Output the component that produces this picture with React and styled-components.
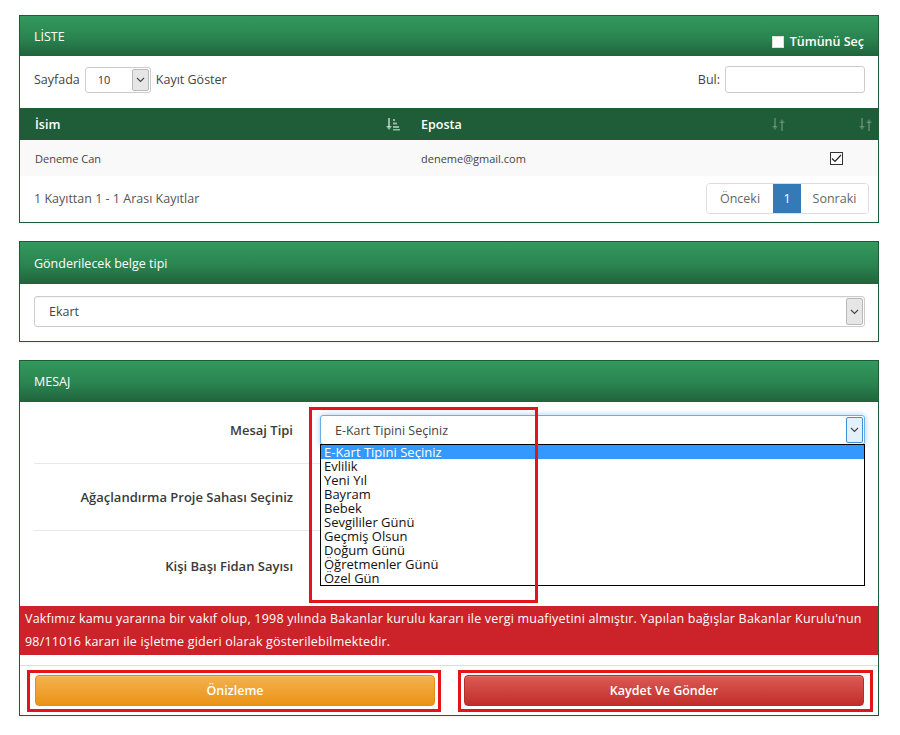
import React from "react";
import styled, { createGlobalStyle } from "styled-components";

const GlobalStyle = createGlobalStyle`
  html, body { margin: 0; padding: 0; background: #fff; }
  body { font-family: "Open Sans", "Noto Sans", Arial, sans-serif; color: #333; font-size: 13px; }
  * { box-sizing: border-box; }
`;

const Page = styled.div`
  display: flex;
  flex-direction: column;
  gap: 18px;
  padding: 15px 21px 20px 19px;
`;

const Panel = styled.section`
  border: 1px solid #1f5a37;
  background: #fff;
  box-shadow: 0 1px 2px rgba(0,0,0,0.06);
  position: relative;
`;

const PanelHeader = styled.header`
  height: ${p => p.$h || 40}px;
  background: linear-gradient(to bottom, #33995d 0%, #2a8450 55%, #21633b 100%);
  color: #fff;
  font-size: 12.5px;
  padding: 0 14px;
  display: flex;
  align-items: center;
  justify-content: space-between;
`;

const HeaderCheck = styled.label`
  display: flex;
  align-items: center;
  gap: 6px;
  margin-top: 11px;
  font-size: 12.5px;
  font-weight: 600;
`;

const WhiteBox = styled.span`
  width: 12px;
  height: 12px;
  background: #fff;
  border: 1px solid #ddd;
  display: inline-block;
`;

const Controls = styled.div`
  display: flex;
  align-items: center;
  justify-content: space-between;
  padding: 10px 13px 15px 14px;
  font-size: 12.5px;
  color: #444;
`;

const Inline = styled.div`
  display: flex;
  align-items: center;
  gap: 5px;
`;

const SmallSelect = styled.div`
  width: 66px;
  height: 26px;
  border: 1px solid #ccc;
  border-radius: 3px;
  display: flex;
  align-items: center;
  justify-content: space-between;
  padding-left: 12px;
  font-size: 11px;
  color: #333;
  background: #fff;
`;

const ArrowBox = styled.span`
  width: 17px;
  align-self: stretch;
  margin: 1px;
  border: 1px solid ${p => (p.$focus ? "#3c8fd8" : "#b9b9b9")};
  background: ${p => (p.$focus ? "#e4f0fb" : "#e6e6e6")};
  border-radius: 2px;
  display: flex;
  align-items: center;
  justify-content: center;
`;

const SearchInput = styled.div`
  width: 140px;
  height: 27px;
  border: 1px solid #ccc;
  border-radius: 3px;
`;

const Table = styled.div`
  display: grid;
  grid-template-columns: 386px 385px 1fr;
`;

const Th = styled.div`
  height: 32px;
  background: #1f5d38;
  color: #fff;
  font-weight: 600;
  font-size: 12.5px;
  display: flex;
  align-items: center;
  justify-content: space-between;
  padding: 0 6px 0 15px;
`;

const Td = styled.div`
  height: 36px;
  background: #f9f9f9;
  font-size: 11px;
  color: #444;
  display: flex;
  align-items: center;
  justify-content: ${p => (p.$center ? "center" : "flex-start")};
  padding-left: ${p => (p.$center ? 0 : 15)}px;
`;

const CheckedBox = styled.span`
  width: 13px;
  height: 13px;
  border: 1px solid #333;
  display: flex;
  align-items: center;
  justify-content: center;
  background: #fff;
  margin-left: 4px;
`;

const TableFooter = styled.div`
  display: flex;
  align-items: center;
  justify-content: space-between;
  padding: 7px 9px 8px 14px;
  font-size: 12.5px;
  color: #555;
`;

const Pager = styled.div`
  display: flex;
  border: 1px solid #ddd;
  border-radius: 4px;
  overflow: hidden;
  height: 31px;
`;

const PageBtn = styled.span`
  width: ${p => p.$w}px;
  display: flex;
  align-items: center;
  justify-content: center;
  font-size: 12.5px;
  color: ${p => (p.$active ? "#fff" : "#666")};
  background: ${p => (p.$active ? "#337ab7" : "#fff")};
`;

const PanelBody = styled.div`
  padding: ${p => p.$pad || "12px 13px 14px 14px"};
  position: relative;
`;

const Select = styled.div`
  height: ${p => p.$h || 31}px;
  border: 1px solid ${p => (p.$focus ? "#66afe9" : "#ccc")};
  box-shadow: ${p => (p.$focus ? "0 0 6px rgba(102,175,233,0.6)" : "inset 0 1px 1px rgba(0,0,0,0.05)")};
  border-radius: 3px;
  display: flex;
  align-items: center;
  justify-content: space-between;
  padding-left: 14px;
  font-size: 12.5px;
  color: #444;
  background: #fff;
`;

const FormRow = styled.div`
  display: grid;
  grid-template-columns: 259px 1fr;
  column-gap: 27px;
  align-items: center;
  padding: ${p => p.$pad || "15px 0"};
  border-bottom: ${p => (p.$line ? "1px solid #e8e8e8" : "none")};
`;

const FormLabel = styled.div`
  text-align: right;
  font-size: 13px;
  font-weight: 600;
  color: #3a3a3a;
`;

const Field = styled.div`
  position: relative;
`;

const DropList = styled.ul`
  position: absolute;
  left: 0;
  right: 0;
  top: 29px;
  margin: 0;
  padding: 0;
  list-style: none;
  border: 1px solid #000;
  background: #fff;
  z-index: 5;
`;

const DropItem = styled.li`
  height: 14px;
  line-height: 14px;
  font-size: 13px;
  padding-left: 3px;
  color: ${p => (p.$sel ? "#fff" : "#111")};
  background: ${p => (p.$sel ? "#3399ff" : "transparent")};
`;

const Annot = styled.div`
  position: absolute;
  border: 3px solid #e4141b;
  pointer-events: none;
  z-index: 6;
  left: ${p => p.$l}px;
  top: ${p => p.$t}px;
  width: ${p => p.$w}px;
  height: ${p => p.$hh}px;
`;

const Alert = styled.div`
  background: #cc2229;
  color: #fff;
  font-size: 12.5px;
  letter-spacing: 0.2px;
  line-height: 23px;
  padding: 1px 5px 2px 5px;
  margin-top: 6px;
`;

const Actions = styled.div`
  margin-top: 10px;
  border-top: 1px solid #ddd;
  display: grid;
  grid-template-columns: 1fr 1fr;
  padding: 9px 0 9px;
`;

const ActionCol = styled.div`
  padding: 0 14px 0 15px;
`;

const BtnWrap = styled.div`
  position: relative;
  &::after {
    content: "";
    position: absolute;
    left: ${p => p.$l}px;
    right: ${p => p.$r}px;
    top: -5px;
    bottom: -6px;
    border: 3px solid #e4141b;
  }
`;

const Button = styled.button`
  width: 100%;
  height: 31px;
  border-radius: 4px;
  font-family: inherit;
  font-size: 12.5px;
  font-weight: 600;
  color: #fff;
  border: 1px solid ${p => (p.$kind === "warn" ? "#e38d13" : "#b92c28")};
  background: ${p =>
    p.$kind === "warn"
      ? "linear-gradient(to bottom, #f3b24f 0%, #eb9316 100%)"
      : "linear-gradient(to bottom, #dc5a55 0%, #c12e2a 100%)"};
  box-shadow: inset 0 1px 0 rgba(255,255,255,0.15);
`;

const Chevron = () => (
  <svg width="9" height="6" viewBox="0 0 9 6">
    <path d="M1 1 L4.5 4.5 L8 1" fill="none" stroke="#444" strokeWidth="1.1" />
  </svg>
);

const SortAmount = () => (
  <svg width="14" height="13" viewBox="0 0 14 13">
    <g fill="rgba(255,255,255,0.55)">
      <rect x="2" y="0" width="2" height="9" />
      <path d="M0 8 L6 8 L3 12 Z" />
      <rect x="7" y="1" width="2" height="2" />
      <rect x="7" y="4.5" width="4" height="2" />
      <rect x="7" y="8" width="6" height="2" />
      <rect x="7" y="11" width="7" height="1.5" />
    </g>
  </svg>
);

const SortBoth = () => (
  <svg width="13" height="13" viewBox="0 0 13 13">
    <g fill="rgba(255,255,255,0.22)">
      <rect x="2" y="0" width="2" height="9" />
      <path d="M0 8 L6 8 L3 12 Z" />
      <rect x="9" y="4" width="2" height="9" />
      <path d="M7 5 L13 5 L10 1 Z" />
    </g>
  </svg>
);

const options = [
  "E-Kart Tipini Seçiniz",
  "Evlilik",
  "Yeni Yıl",
  "Bayram",
  "Bebek",
  "Sevgililer Günü",
  "Geçmiş Olsun",
  "Doğum Günü",
  "Öğretmenler Günü",
  "Özel Gün",
];

export default function App() {
  return (
    <>
      <GlobalStyle />
      <Page>
        <Panel>
          <PanelHeader>
            <span>LİSTE</span>
            <HeaderCheck>
              <WhiteBox />
              Tümünü Seç
            </HeaderCheck>
          </PanelHeader>
          <Controls>
            <Inline>
              <span>Sayfada</span>
              <SmallSelect>
                10
                <ArrowBox>
                  <Chevron />
                </ArrowBox>
              </SmallSelect>
              <span>Kayıt Göster</span>
            </Inline>
            <Inline>
              <span>Bul:</span>
              <SearchInput />
            </Inline>
          </Controls>
          <Table>
            <Th>
              İsim <SortAmount />
            </Th>
            <Th>
              Eposta <SortBoth />
            </Th>
            <Th>
              <span />
              <SortBoth />
            </Th>
            <Td>Deneme Can</Td>
            <Td>deneme@gmail.com</Td>
            <Td $center>
              <CheckedBox>
                <svg width="11" height="9" viewBox="0 0 11 9">
                  <path d="M1 4.5 L4 7.5 L10 1" fill="none" stroke="#222" strokeWidth="1.2" />
                </svg>
              </CheckedBox>
            </Td>
          </Table>
          <TableFooter>
            <span>1 Kayıttan 1 - 1 Arası Kayıtlar</span>
            <Pager>
              <PageBtn $w={66}>Önceki</PageBtn>
              <PageBtn $w={28} $active>1</PageBtn>
              <PageBtn $w={67}>Sonraki</PageBtn>
            </Pager>
          </TableFooter>
        </Panel>

        <Panel>
          <PanelHeader $h={42}>
            <span>Gönderilecek belge tipi</span>
          </PanelHeader>
          <PanelBody>
            <Select>
              Ekart
              <ArrowBox>
                <Chevron />
              </ArrowBox>
            </Select>
          </PanelBody>
        </Panel>

        <Panel>
          <PanelHeader $h={41}>
            <span>MESAJ</span>
          </PanelHeader>
          <PanelBody $pad="0 13px 0 14px">
            <FormRow $line $pad="13px 0 18px">
              <FormLabel>Mesaj Tipi</FormLabel>
              <Field>
                <Select $focus $h={30}>
                  E-Kart Tipini Seçiniz
                  <ArrowBox $focus>
                    <Chevron />
                  </ArrowBox>
                </Select>
                <DropList>
                  {options.map((o, i) => (
                    <DropItem key={o} $sel={i === 0}>
                      {o}
                    </DropItem>
                  ))}
                </DropList>
              </Field>
            </FormRow>
            <FormRow $line $pad="18px 0 18px">
              <FormLabel>Ağaçlandırma Proje Sahası Seçiniz</FormLabel>
              <Field>
                <Select $h={30}>
                  <span />
                  <ArrowBox>
                    <Chevron />
                  </ArrowBox>
                </Select>
              </Field>
            </FormRow>
            <FormRow $pad="20px 0 19px">
              <FormLabel>Kişi Başı Fidan Sayısı</FormLabel>
              <Field>
                <Select $h={30} />
              </Field>
            </FormRow>
            <Annot $l={289} $t={5} $w={229} $hh={196} />
          </PanelBody>
          <Alert>
            Vakfımız kamu yararına bir vakıf olup, 1998 yılında Bakanlar kurulu kararı ile vergi muafiyetini almıştır. Yapılan bağışlar Bakanlar Kurulu'nun 98/11016 kararı ile işletme gideri olarak gösterilebilmektedir.
          </Alert>
          <Actions>
            <ActionCol>
              <BtnWrap $l={-8} $r={-6}>
                <Button $kind="warn">Önizleme</Button>
              </BtnWrap>
            </ActionCol>
            <ActionCol>
              <BtnWrap $l={-6} $r={-9}>
                <Button $kind="danger">Kaydet Ve Gönder</Button>
              </BtnWrap>
            </ActionCol>
          </Actions>
        </Panel>
      </Page>
    </>
  );
}
